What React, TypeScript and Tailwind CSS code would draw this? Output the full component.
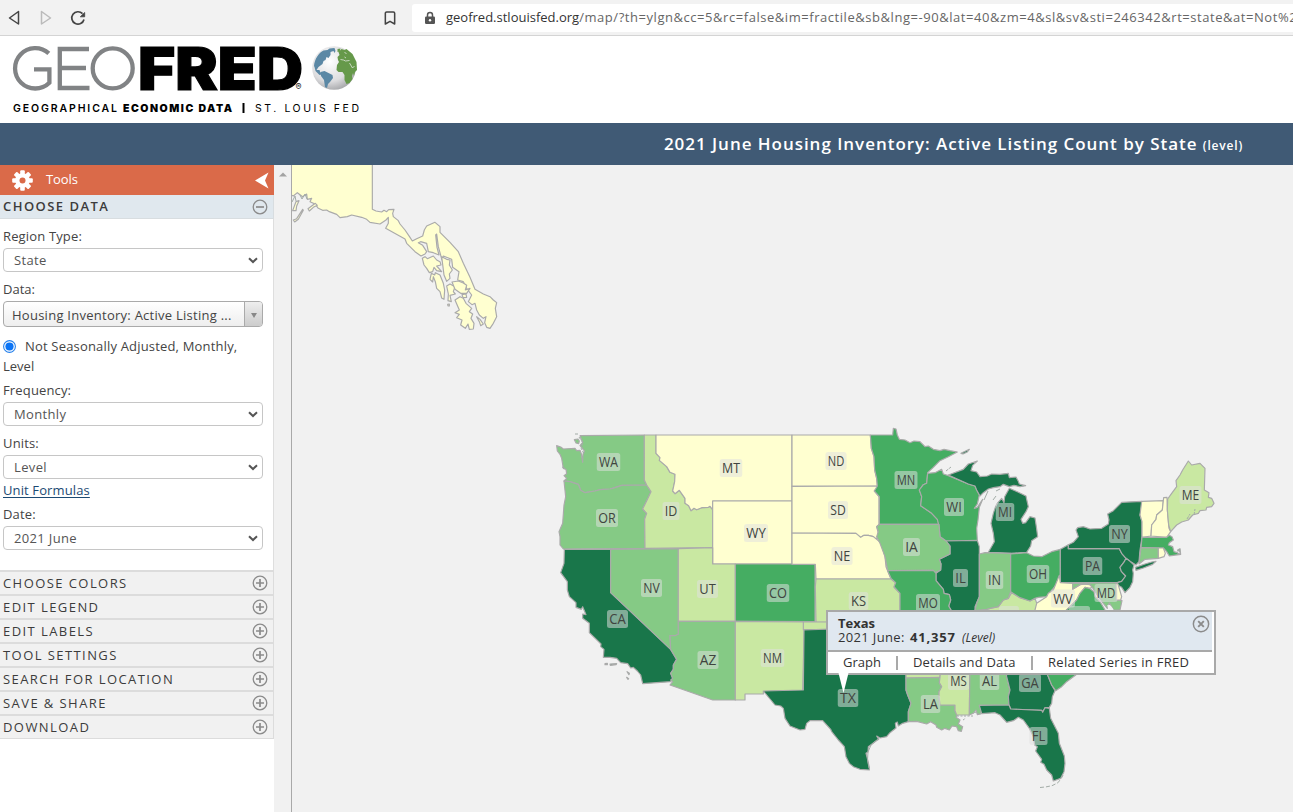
import React from "react";
import { Bookmark, Lock } from "lucide-react";

const DARK = "#19764a";
const MID = "#45ad62";
const LIGHT = "#85ca85";
const PALE = "#c9e8a2";
const CREAM = "#ffffd0";

type Shape = [fill: string, points: string];

// Outlines are stored at triple scale, grouped by map sheet.
const sheets: { x: number; y: number; shapes: Shape[] }[] = [
  {
    x: 290,
    y: 160,
    shapes: [
      [CREAM, "0,5 247,5 247,148 258,153 275,156 282,151 290,155 296,149 312,148 308,160 310,170 325,182 330,192 345,210 360,232 367,243 380,236 398,228 403,210 410,198 435,187 450,200 450,217 480,247 505,275 520,310 540,352 555,388 580,402 600,410 610,420 620,428 616,445 620,470 610,490 600,505 590,502 584,488 588,470 580,475 568,465 560,450 555,430 546,434 535,425 545,405 530,385 520,365 503,360 507,335 488,322 485,298 460,288 456,300 445,260 440,222 437,225 441,262 447,285 430,278 415,275 410,250 392,245 385,248 398,256 410,275 405,282 393,288 375,275 350,250 345,237 318,222 287,205 295,190 295,172 288,180 270,192 240,187 230,178 215,172 185,165 172,170 150,173 140,163 118,155 110,150 98,151 85,145 75,132 60,125 65,115 52,118 50,102 38,110 22,98 10,108 0,103"],
      [CREAM, "397,295 405,290 412,296 430,288 440,300 450,305 453,315 440,318 455,335 440,332 432,322 428,335 418,338 410,325 402,315"],
      [CREAM, "424,340 434,345 436,338 450,345 460,370 464,390 462,418 455,414 450,395 440,385 436,365 430,350 428,366 420,358"],
      [CREAM, "455,290 470,298 480,300 478,315 487,330 478,342 480,355 470,364 462,345"],
      [CREAM, "470,378 480,372 495,380 490,395 496,402 480,406 484,425 474,422 475,402"],
      [CREAM, "486,366 505,363 520,369 530,376 526,390 540,385 530,400 512,400 495,388"],
      [CREAM, "495,420 510,410 520,415 528,430 545,445 538,455 548,462 543,475 552,490 550,507 538,508 534,492 526,505 512,495 516,480 500,473 508,463 495,458 508,450"],
      [CREAM, "516,404 528,402 530,412 519,413"],
      [CREAM, "560,470 570,478 580,492 572,497 568,485"],
      [CREAM, "10,180 20,176 38,148 40,151 25,178 14,186"],
      [CREAM, "8,152 18,125 27,122 20,138 18,152"],
      [CREAM, "54,146 76,130 82,136 70,142 58,153"],
      [CREAM, "473,433 478,432 478,438 474,438"],
    ],
  },
  {
    x: 550,
    y: 425,
    shapes: [
      [LIGHT, "20,62 32,66 40,72 75,70 80,77 90,76 94,86 98,112 99,88 103,78 96,68 90,62 98,52 90,32 283,30 283,165 290,180 215,181 195,188 180,192 150,194 135,198 105,203 92,196 85,178 60,170 42,168 50,160 42,152 50,146 48,133 40,130 35,100 30,88 22,78"],
      [LIGHT, "73,44 84,42 88,48 86,56 78,54"],
      [LIGHT, "42,168 60,170 85,178 92,196 105,203 135,198 150,194 180,192 195,188 215,181 290,180 303,200 296,215 288,232 278,252 290,265 284,282 285,370 40,372 30,360 30,335 27,320 38,295 42,240 47,215"],
      [PALE, "283,30 318,30 318,85 330,98 328,106 350,125 360,142 375,148 374,170 368,198 375,206 388,196 405,220 405,235 416,242 423,257 432,250 440,254 455,248 475,247 480,244 488,254 488,368 285,370 284,282 290,265 278,252 288,232 303,200 290,180 283,165"],
      [CREAM, "318,30 726,30 726,228 488,228 488,254 480,244 475,247 455,248 440,254 432,250 423,257 416,242 405,235 405,220 388,196 375,206 368,198 374,170 375,148 360,142 350,125 328,106 330,98 318,85"],
      [CREAM, "488,228 726,228 726,417 488,417"],
    ],
  },
  {
    x: 550,
    y: 540,
    shapes: [
      [DARK, "43,28 182,28 182,158 362,328 380,358 370,375 370,388 362,400 368,415 362,425 278,431 272,405 262,393 250,382 242,384 233,371 212,368 200,355 180,352 160,352 162,328 152,320 153,312 118,278 118,250 98,235 98,222 108,224 98,200 94,208 78,202 78,188 58,170 52,150 52,125 32,98 42,70"],
      [DARK, "165,371 172,370 172,374 165,374"],
      [DARK, "180,372 200,371 198,374 181,376"],
      [DARK, "231,395 238,400 237,404"],
      [DARK, "230,412 236,416 234,418"],
      [LIGHT, "182,28 385,26 385,283 375,287 360,287 362,328 182,158"],
      [PALE, "385,26 488,23 488,72 556,72 556,244 385,244"],
      [MID, "556,72 795,72 795,245 556,244"],
      [LIGHT, "385,244 556,244 556,480 488,480 360,435 368,425 362,420 368,415 362,400 370,388 370,375 380,358 362,328 360,287 375,287 385,283"],
      [PALE, "556,244 763,246 758,452 640,455 640,462 585,462 585,480 556,480"],
    ],
  },
  {
    x: 730,
    y: 420,
    shapes: [
      [CREAM, "186,45 421,45 424,85 432,110 434,150 440,175 442,198 186,199"],
      [CREAM, "186,199 442,198 440,206 433,213 447,230 447,313 440,320 445,340 440,358 430,350 415,346 402,346 392,352 378,340 186,339"],
      [CREAM, "186,339 378,340 392,352 402,346 415,346 430,350 440,358 450,366 458,385 465,410 468,440 483,477 258,477 256,433 186,433"],
      [PALE, "258,477 483,477 497,488 492,502 510,520 510,610 258,606 256,500"],
      [PALE, "220,606 300,606 300,629 220,629"],
    ],
  },
  {
    x: 860,
    y: 420,
    shapes: [
      [MID, "31,45 98,45 100,25 108,27 112,45 118,58 135,60 150,68 162,63 180,65 195,80 205,78 220,88 240,92 252,88 270,92 292,96 265,110 240,122 220,142 203,158 200,190 190,194 178,210 185,230 182,257 215,280 232,298 237,313 58,313 58,230 43,213 52,198 50,175 44,150 42,110 34,85"],
      [MID, "203,160 225,158 245,148 250,162 265,167 325,192 345,198 350,210 358,225 352,252 343,265 352,262 368,238 358,262 354,300 350,325 352,361 258,363 240,350 237,318 232,298 215,280 182,257 185,230 178,210 190,194 200,190"],
      [DARK, "265,165 310,148 325,132 352,123 338,136 333,152 350,156 360,170 382,168 395,162 420,163 445,160 448,173 468,171 475,184 478,192 497,197 480,200 462,196 448,200 430,193 420,200 400,203 385,207 370,218 360,228 350,210 345,198 325,192"],
      [DARK, "303,100 328,88 322,96 309,102"],
      [DARK, "385,397 403,365 400,340 393,310 400,280 406,262 412,250 425,235 432,248 434,230 448,205 465,212 478,218 498,228 500,238 505,260 498,275 483,298 488,310 497,308 510,290 525,294 529,320 533,350 515,362 512,378 500,397 450,400"],
      [DARK, "258,363 352,361 358,380 358,530 345,560 345,600 290,600 266,558 272,540 268,524 252,520 250,508 228,482 228,460 242,450 243,432 238,418 270,402 270,378"],
      [LIGHT, "58,313 237,313 240,350 258,363 270,378 270,402 238,418 243,432 242,450 225,458 220,451 83,452 75,410 60,370 50,350 55,335 50,320"],
      [MID, "83,452 220,451 228,460 228,482 250,508 252,520 268,524 272,540 266,558 290,600 120,600 120,520 102,500 107,488 93,475"],
      [PALE, "345,600 355,572 380,568 390,565 415,560 430,540 445,535 455,518 480,533 510,543 525,535 532,555 545,575 535,600"],
      [LIGHT, "358,402 375,398 452,400 452,515 445,535 430,540 415,560 390,565 380,568 345,572 350,550 358,530"],
      [MID, "452,402 500,398 520,408 545,410 575,395 601,388 601,465 595,485 580,505 565,522 560,530 535,532 525,535 510,543 480,533 452,515"],
    ],
  },
  {
    x: 1030,
    y: 450,
    shapes: [
      [DARK, "91,298 115,284 115,296 268,296 275,310 288,325 283,335 270,352 274,364 287,378 275,394 262,398 91,398"],
      [DARK, "115,284 130,277 145,260 138,240 143,233 160,230 180,237 215,235 235,222 237,210 233,192 250,182 275,157 335,154 334,180 330,195 336,215 336,262 330,300 327,335 318,345 300,334 288,325 275,310 268,296 115,296"],
      [DARK, "316,352 345,342 365,336 378,334 368,343 340,354 318,361"],
      [DARK, "288,325 300,334 312,345 308,360 310,370 308,395 300,412 285,428 275,412 262,405 262,398 275,394 287,378 274,364 270,352 283,335"],
      [CREAM, "335,154 400,152 397,180 380,195 378,208 365,225 363,258 336,262 336,215 330,195"],
      [CREAM, "400,152 401,143 411,142 412,180 417,235 422,245 410,262 363,258 365,225 378,208 380,195 397,180"],
      [PALE, "413,147 425,130 440,110 438,92 450,75 458,60 475,33 485,45 510,40 525,55 523,120 537,128 535,142 545,145 552,160 545,170 530,172 528,180 510,182 505,190 488,195 475,210 455,216 440,225 422,245 416,225 412,180"],
      [MID, "336,262 410,262 418,256 426,260 430,270 418,278 415,285 428,290 432,305 442,308 450,314 450,305 443,300 450,296 452,313 430,316 418,318 410,305 400,294 333,293"],
      [LIGHT, "333,293 385,294 385,325 345,328 327,342"],
      [CREAM, "385,294 400,294 406,310 402,320 385,325"],
      [CREAM, "88,376 91,398 128,400 128,418 150,404 165,402 180,404 187,412 178,415 165,412 150,430 140,450 120,470 105,484 105,510 25,510 15,480 20,460 50,440 55,430 70,420"],
      [MID, "105,484 120,470 140,450 150,430 165,412 178,415 192,425 195,440 210,455 225,480 225,510 105,510"],
      [LIGHT, "128,400 258,398 262,450 276,452 270,480 250,480 238,458 232,475 220,460 205,440 187,412 180,404 165,402 150,404 128,418"],
      [CREAM, "258,398 264,402 275,440 272,450 258,450"],
    ],
  },
  {
    x: 740,
    y: 600,
    shapes: [
      [DARK, "192,90 300,86 300,180 498,200 498,270 503,285 513,310 505,335 505,365 488,370 475,378 472,366 466,370 468,384 450,398 440,410 420,414 410,408 416,418 405,425 385,440 384,456 378,460 382,475 388,503 388,510 360,508 340,500 328,490 318,470 313,440 295,420 275,395 272,388 248,362 210,362 200,370 195,388 180,390 150,378 135,355 130,325 122,318 105,315 70,273 190,270"],
      [PALE, "498,180 604,180 600,232 498,234"],
      [LIGHT, "498,234 600,232 598,248 605,260 597,275 597,290 600,315 645,315 645,332 652,345 648,352 660,360 655,372 668,380 664,394 655,392 650,380 636,378 628,390 615,385 605,390 590,382 588,375 572,365 560,372 530,364 505,365 505,335 513,310 503,285 498,270"],
      [PALE, "600,232 604,180 690,180 688,345 650,345 645,332 645,315 600,315 597,290 597,275 605,260 598,248"],
    ],
  },
  {
    x: 890,
    y: 600,
    shapes: [
      [LIGHT, "240,180 350,180 350,230 360,270 355,290 357,315 268,316 275,330 272,342 262,344 258,330 250,340 238,345"],
      [DARK, "345,180 465,200 475,230 485,255 495,272 487,290 485,310 478,322 465,323 458,337 455,331 362,327 357,315 355,290 360,270 350,230"],
      [MID, "460,200 590,200 550,230 530,245 515,260 497,272 485,255 475,230"],
      [DARK, "268,316 357,315 362,327 455,331 458,337 465,323 478,325 482,355 505,400 508,430 523,468 525,490 522,515 512,535 490,543 485,525 470,510 462,493 452,487 455,478 437,453 442,440 434,435 430,410 418,385 400,360 385,352 370,362 350,367 330,345 315,338 275,341"],
    ],
  },
];

const labels: [string, number, number][] = [
  ["WA", 608.5, 462], ["OR", 607, 518], ["ID", 671, 511], ["MT", 731, 468],
  ["ND", 836, 461], ["SD", 838, 510], ["NE", 842, 556], ["WY", 756, 533],
  ["CO", 778, 593], ["UT", 707.5, 589], ["NV", 651.5, 588], ["CA", 617.5, 619],
  ["AZ", 708, 660], ["NM", 772.5, 658], ["KS", 858.5, 601], ["MO", 928, 603],
  ["IA", 911.5, 547], ["IL", 960.5, 578], ["IN", 994.5, 580], ["WI", 954, 507],
  ["MN", 906, 480], ["MI", 1005, 512], ["OH", 1038, 574], ["WV", 1063, 598.5],
  ["PA", 1092.5, 566], ["NY", 1119.5, 534], ["MD", 1106, 593], ["ME", 1190.5, 495],
  ["TX", 848, 698], ["LA", 930.5, 704], ["MS", 958.5, 681], ["AL", 989.5, 681],
  ["GA", 1030, 683], ["FL", 1038.5, 736],
];

// Text widths in pixels; anything not listed is 17 wide.
const widths: Record<string, number> = {
  ID: 13, IA: 13, IL: 11, IN: 13.5, MI: 14.5, WI: 16, MN: 19, MO: 20, NM: 19.5, WV: 20, WY: 20,
  MD: 19, OH: 18.5, WA: 19.5, FL: 14, LA: 15.5, AL: 15.5, TX: 16.5, KS: 15.5, SD: 16, PA: 15.5, UT: 17,
  MT: 18.5, OR: 18, CO: 18.5, ME: 18, GA: 18,
};

function StateMap() {
  return (
    <svg className="block h-[647px] w-[1001px] flex-none bg-[#f1f1f1]" viewBox="292 165 1001 647">
      {sheets.map((s, i) => (
        <g key={i} transform={`translate(${s.x} ${s.y}) scale(${1 / 3})`} stroke="#aaaaaa" strokeWidth="3.500" strokeLinejoin="round">
          {s.shapes.map(([fill, points], j) => (
            <polygon key={j} fill={fill} points={points} />
          ))}
        </g>
      ))}
      <g fill="none" stroke="#a3aca7" strokeWidth="1">
        <path d="M1040 787.5l6-.6 6-1.2 6-3 4-5.500 2-4" strokeDasharray="4 2" />
        <path d="M869 768l-1.500-8 .5-8 3-7 7-6" />
        <path d="M575 434h3M579 437l4 6-2 5 3 6M562 467l3 1M1187 519l3-5M1194 515l1-6M1177 551l4-1M946 471l5-4" strokeDasharray="3 1" />
        <path d="M957 716h17M963 720l3-2M974 712l5 2" strokeDasharray="2 1.500" />
        <path d="M984 500l4-9M993 500l3-4M996 491l4-2" />
        <path d="M292 202l3-6 1 5M300 195l2 4 3-5 2 5" />
      </g>
      <path d="M1110 606l3 4M1108 605l1 4" stroke="#f1f1f1" strokeWidth="1.500" />
      <rect x="1069" y="606" width="21" height="18" rx="2.500" fill="#e0e0e0" fillOpacity=".5" />
      <rect x="999" y="606" width="20" height="18" rx="2.500" fill="#e0e0e0" fillOpacity=".5" />
      {labels.map(([t, x, y]) => {
        const w = widths[t] ?? 17;
        return (
          <g key={t}>
            <rect x={x - w / 2 - 2} y={y - 9} width={w + 4} height="18" rx="2.500" fill="#e0e0e0" fillOpacity=".52" />
            <text x={x} y={y + 5} textAnchor="middle" textLength={w - 0.5} lengthAdjust="spacingAndGlyphs" fontSize="14" fill="#40443f" fontFamily="'Open Sans', sans-serif">
              {t}
            </text>
          </g>
        );
      })}
    </svg>
  );
}

function Logo() {
  return (
    <svg className="block h-[87px] w-[380px] overflow-visible" viewBox="0 36 380 87">
      <defs>
        <radialGradient id="ball" cx=".4" cy=".35" r=".7">
          <stop offset="0" stopColor="#ffffff" />
          <stop offset=".65" stopColor="#dddddf" />
          <stop offset="1" stopColor="#a2a3a6" />
        </radialGradient>
      </defs>
      <g fill="none" stroke="#818385" strokeWidth="4.300">
        <path d="M48.800 53.300A20.200 20.200 0 1 0 49.400 82.700V69.400H34" />
        <path d="M89 49H59.800V88H89.500M60 68H86" />
        <circle cx="112.700" cy="68.300" r="20" />
      </g>
      <text x="138" y="90" textLength="165" lengthAdjust="spacingAndGlyphs" fontFamily="Inter, sans-serif" fontWeight="900" fontSize="59.500" fill="#000" stroke="#000" strokeWidth="1.200">FRED</text>
      <text x="295.500" y="90" fontFamily="Inter, sans-serif" fontSize="9" fill="#222">®</text>
      <g transform="translate(-.5 0)">
        <circle cx="334.500" cy="68" r="21.800" fill="url(#ball)" />
        <path fill="#5b88a5" d="M314.500 66c.5-7 5-13.500 9.500-15.500l4-.5 2-1.500 5-.5 1 3-1 2-1-2-3 1 0 3-2 3-2-1-1 3-2 1-1 3-4 3-2 3 3 0 1 3 3 1-4 1-4-4-1-4zM321 72l4-1 8 4 .5 3-3 4-2 2-1 4-2-1-1-7-3-4z" />
        <path fill="#66994a" d="M338 57l2-2-1-3 3-3 3 1 2-1 6 5 4 8 .5 8-2 2-1 4-1-3-1 3 .5 3-3 4-3 1-2-4 0-5-2-3-4 0-2-2 .5-5 2-3-1-2zM338 49l3-.5-1 3-2 .5z" />
        <path fill="none" stroke="#eee" strokeWidth=".9" opacity=".8" d="M341 59.500l3 .5 2 1 4-.5M345 57l1.500 1M350 63l3 5 2-2M345 52l2 2" />
      </g>
      <g fontFamily="Inter, sans-serif" fontSize="10.500" fill="#000">
        <text x="13" y="111.500" fontWeight="600" textLength="104">GEOGRAPHICAL</text>
        <text x="123" y="111.500" fontWeight="900" textLength="109">ECONOMIC DATA</text>
        <path d="M243.500 103v10" stroke="#000" strokeWidth="2" />
        <text x="255" y="111.500" fontWeight="400" textLength="104">ST. LOUIS FED</text>
      </g>
    </svg>
  );
}

function CircleIcon({ d, className }: { d: string; className: string }) {
  return (
    <svg className={className} viewBox="0 0 16 16" fill="none" stroke="#8b8b8b">
      <circle cx="8" cy="8" r="6.800" strokeWidth="1.300" />
      <path d={d} strokeWidth="1.700" />
    </svg>
  );
}

function Gear() {
  return (
    <svg className="h-[21px] w-[21px]" viewBox="-10.500 -10.500 21 21">
      {[0, 45, 90, 135].map((a) => (
        <rect key={a} x="-2.300" y="-10.300" width="4.600" height="20.600" rx="1" fill="#fff" transform={`rotate(${a})`} />
      ))}
      <circle r="7.300" fill="#fff" />
      <circle r="3" fill="#da6a49" />
    </svg>
  );
}

function Field({ label, value }: { label: string; value: string }) {
  return (
    <>
      <div className="flex h-6 items-center pt-[2px] text-[13px] tracking-[0.150px]">{label}</div>
      <button className="flex h-6 w-[260px] items-center justify-between rounded-[4px] border border-[#c6c6c6] bg-white pl-[10px] pr-1 text-left text-[13px] tracking-[0.350px] text-[#555]">
        <span className="pt-px">{value}</span>
        <svg className="h-[7px] w-[10px]" viewBox="0 0 10 7" fill="none" stroke="#555" strokeWidth="2">
          <path d="M1 1.200l4 3.800 4-3.800" />
        </svg>
      </button>
    </>
  );
}

const sections = ["CHOOSE COLORS", "EDIT LEGEND", "EDIT LABELS", "TOOL SETTINGS", "SEARCH FOR LOCATION", "SAVE & SHARE", "DOWNLOAD"];

function ToolsPanel() {
  return (
    <aside className="flex w-[274px] flex-none flex-col bg-white text-[#444]">
      <div className="flex h-[30px] items-center bg-[#da6a49] pl-[12px] pr-[5px] text-white">
        <Gear />
        <span className="ml-[13px] flex-1 text-[13px] tracking-[-0.100px]">Tools</span>
        <svg className="h-[17px] w-[14px]" viewBox="0 0 14 17" fill="#fff">
          <path d="M0 8.500L13.500.5 10 8.500l3.500 8z" />
        </svg>
      </div>
      <div className="flex h-6 items-center border-b border-r border-[#d8dde0] bg-[#e0e8ee] pl-[3px] pr-[5px]">
        <span className="flex-1 pt-px text-[13px] font-semibold tracking-[1.450px] text-[#3c3c3c]">CHOOSE DATA</span>
        <CircleIcon className="h-4 w-4" d="M4 8h8" />
      </div>
      <div className="h-[351px] border-r border-[#dedede] pl-[3px] pt-[5px]">
        <Field label="Region Type:" value="State" />
        <div className="mt-[5px]" />
        <div className="flex h-6 items-center pt-[2px] text-[13px]">Data:</div>
        <div className="flex h-[26px] w-[260px] overflow-hidden rounded-[4px] border border-[#aaa] bg-gradient-to-b from-white to-[#eeeeee]">
          <span className="flex-1 whitespace-nowrap pl-2 text-[13px] leading-[26px] tracking-[0.260px]">Housing Inventory: Active Listing ...</span>
          <span className="flex w-[18px] items-center justify-center border-l border-[#aaa] bg-gradient-to-b from-[#eee] to-[#ccc] pt-[3px]">
            <svg className="h-[5px] w-[6px]" viewBox="0 0 6 5"><path d="M0 0h6L3 5z" fill="#888" /></svg>
          </span>
        </div>
        <div className="h-[51px] pt-[9px] text-[13px] leading-5">
          <svg className="mr-[9px] inline-block h-[13px] w-[13px] align-[-2px]" viewBox="0 0 13 13">
            <circle cx="6.500" cy="6.500" r="5.900" fill="#fff" stroke="#2680eb" strokeWidth="1.100" />
            <circle cx="6.500" cy="6.500" r="4.100" fill="#0b74f5" />
          </svg>
          <span className="tracking-[0.180px]">Not Seasonally Adjusted, Monthly,</span>
          <div>Level</div>
        </div>
        <Field label="Frequency:" value="Monthly" />
        <div className="mt-[5px]" />
        <Field label="Units:" value="Level" />
        <div className="flex h-[23px] items-center text-[13px] tracking-[0.120px]">
          <a className="text-[#1c4a73] underline underline-offset-2">Unit Formulas</a>
        </div>
        <Field label="Date:" value="2021 June" />
      </div>
      <div className="border-b border-[#dcdcdc]">
        {sections.map((s) => (
          <div key={s} className="flex h-6 items-center border-r border-t-2 border-[#dcdcdc] bg-[#f1f1f1] pl-[3px] pr-[5px]">
            <span className="flex-1 pt-px text-[13px] tracking-[1.430px] text-[#3c3c3c]">{s}</span>
            <CircleIcon className="h-4 w-4" d="M4 8h8M8 4v8" />
          </div>
        ))}
      </div>
    </aside>
  );
}

function Popup() {
  return (
    <div className="absolute left-[826px] top-[610px] h-[65px] w-[390px] border-2 border-[#a9a9a9] bg-white text-[13px] text-[#333]">
      <div className="mr-[2px] flex h-[40px] justify-between border-b-2 border-[#a9a9a9] bg-[#e0e8f0] pl-[10px] pr-[2px]">
        <div className="pt-[4px] leading-[14px]">
          <div className="font-bold">Texas</div>
          <div className="flex items-baseline">
            <span className="w-[72px] tracking-[0.350px]">2021 June:</span>
            <b className="w-[52px] tracking-[0.800px]">41,357</b>
            <i className="text-[12px]">(Level)</i>
          </div>
        </div>
        <CircleIcon className="mt-[3px] h-[18px] w-[18px]" d="M5.500 5.500l5 5M10.500 5.500l-5 5" />
      </div>
      <div className="flex h-[22px] items-center pl-[15px]">
        <span className="w-[53px]">Graph</span>
        <span className="h-[14px] w-[2px] bg-[#a9a9a9]" />
        <span className="ml-[15px] w-[118px] whitespace-nowrap tracking-[0.180px]">Details and Data</span>
        <span className="h-[14px] w-[2px] bg-[#a9a9a9]" />
        <span className="ml-[15px] whitespace-nowrap tracking-[0.280px]">Related Series in FRED</span>
      </div>
      <svg className="absolute left-[10px] top-[61px] h-[21px] w-[11px]" viewBox="0 0 11 21">
        <path d="M.5 0L5.500 20l5-20z" fill="#fff" />
      </svg>
    </div>
  );
}

export default function App() {
  return (
    <div className="relative flex h-[812px] w-[1293px] flex-col overflow-hidden bg-white font-['Open_Sans',sans-serif]">
      <div className="flex h-9 flex-none items-center border-b border-[#d4d4d4] bg-[#f2f2f2] pl-[8px]">
        <svg className="h-[18px] w-[80px]" viewBox="8 8 80 18" fill="none" strokeWidth="1.500" strokeLinejoin="round">
          <path d="M18.500 10.500v12.500L9.500 17z" stroke="#444" />
          <path d="M41.500 10.500v12.500l9-6z" stroke="#bbb" />
          <path d="M82.500 12.700A6.200 6.200 0 1 0 84 18.500" stroke="#444" strokeWidth="1.700" />
          <path d="M84.700 11.500v4.300h-4.400z" fill="#444" stroke="#444" strokeWidth=".8" />
        </svg>
        <Bookmark className="ml-[294px] h-4 w-4 text-[#444]" strokeWidth={2.3} />
        <div className="ml-[14px] flex h-7 flex-1 items-center overflow-hidden rounded-l-[3px] bg-white pl-[12px]">
          <svg className="h-[14px] w-[12px] flex-none" viewBox="0 0 12 14">
            <path d="M3.500 6V4a2.500 2.500 0 0 1 5 0v2" fill="none" stroke="#555" strokeWidth="1.500" />
            <rect x="1" y="5.500" width="10" height="7.500" rx="1.200" fill="#555" />
            <circle cx="6" cy="9.200" r="1.200" fill="#fff" />
          </svg>
          <span className="ml-[10px] w-0 flex-1 whitespace-nowrap text-[13px] text-[#666]">
            <span className="text-[#333]">geofred.stlouisfed.org</span>
            <span className="tracking-[0.550px]">/map/?th=ylgn&amp;cc=5&amp;rc=false&amp;im=fractile&amp;sb&amp;lng=-90&amp;lat=40&amp;zm=4&amp;sl&amp;sv&amp;sti=246342&amp;rt=state&amp;at=Not%2</span>
          </span>
        </div>
      </div>
      <header className="h-[87px] flex-none">
        <Logo />
      </header>
      <div className="flex h-[42px] flex-none items-center justify-end bg-[#405a75] pr-[50px] text-white">
        <h1 className="text-[17px] font-semibold tracking-[0.970px]">
          2021 June Housing Inventory: Active Listing Count by State <span className="text-[12px] tracking-[0.800px]">(level)</span>
        </h1>
      </div>
      <main className="flex min-h-0 flex-1">
        <ToolsPanel />
        <div className="flex w-[18px] flex-none justify-center border-r border-[#a9a9a9] bg-[#f1f1f1] pt-[7px]">
          <svg className="h-[5px] w-[8px]" viewBox="0 0 8 5"><path d="M0 4.500L4 .5l4 4z" fill="#a3a3a3" /></svg>
        </div>
        <StateMap />
      </main>
      <Popup />
    </div>
  );
}
